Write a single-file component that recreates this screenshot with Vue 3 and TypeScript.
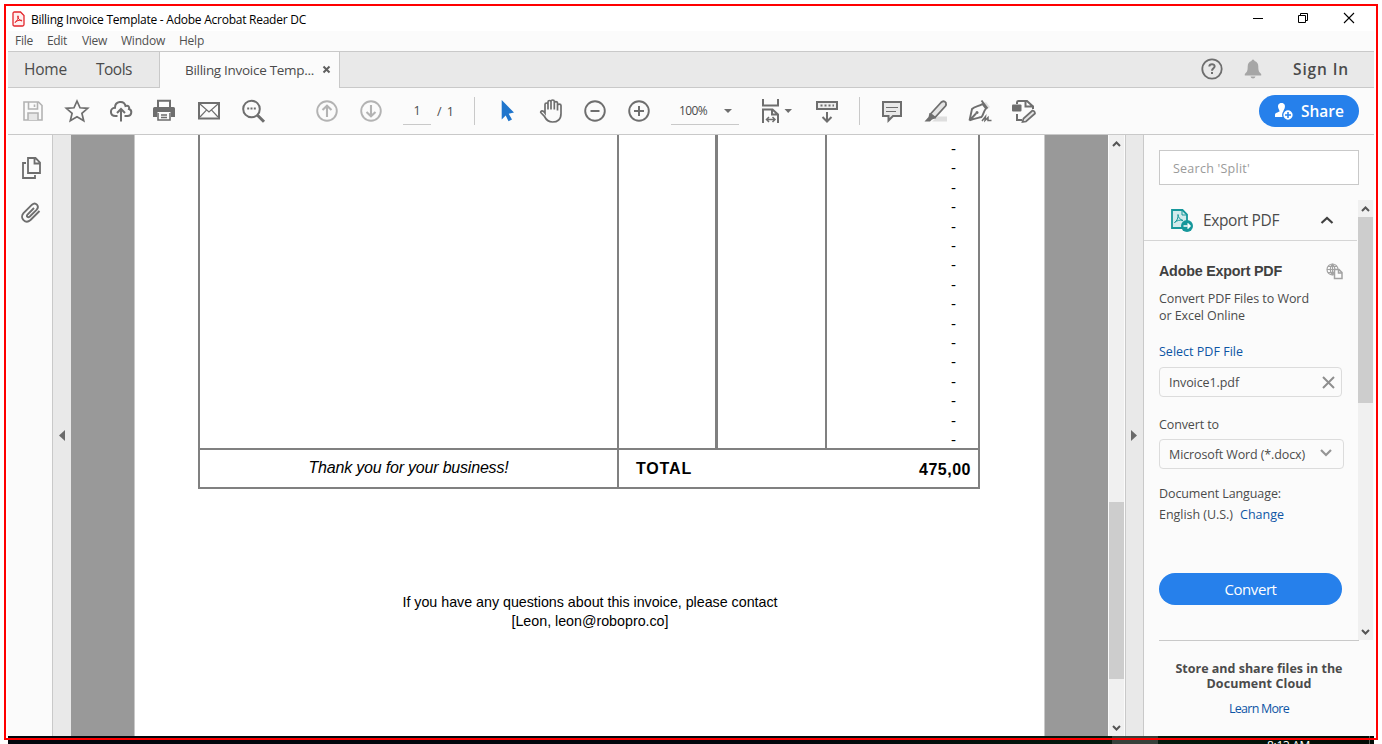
<script setup lang="ts">
import type { Directive } from 'vue'

const menus = [
  { label: 'File', width: 18 },
  { label: 'Edit', width: 20 },
  { label: 'View', width: 25 },
  { label: 'Window', width: 44 },
  { label: 'Help', width: 25 },
]
const rows = Array.from({ length: 16 }, (_, i) => i)

/* Tracks a label so that it occupies the given advance width. */
const vFit: Directive<HTMLElement, number> = {
  mounted(el, binding) {
    const count = (el.textContent ?? '').length
    const natural = el.getBoundingClientRect().width
    el.style.letterSpacing = `${(binding.value - natural) / count}px`
  },
}
</script>

<template>
  <div class="screen">
    <div class="window">
      <header class="titlebar">
        <svg class="app-icon" width="13" height="16" viewBox="0 0 13 16" fill="none">
          <path d="M2.5 1H8.5L12 4.5V13.5Q12 15 10.5 15H2.5Q1 15 1 13.500V2.500Q1 1 2.500 1Z" fill="#fff0f0" stroke="#e3252b" stroke-width="1.300" />
          <path d="M3 11.500C5 10.500 6.700 7 6.200 5C5.700 4 5 6 7 8.300C8.500 10 10.300 10.300 10 9.500C9.500 8.500 5 9.500 3.500 10.800Z" stroke="#e3252b" stroke-width="1" />
        </svg>
        <span v-fit="275" class="t title">Billing Invoice Template - Adobe Acrobat Reader DC</span>
        <svg class="controls" width="110" height="20" viewBox="0 0 110 20" fill="none" stroke="#000" stroke-width="1">
          <path d="M5 10.500H15" />
          <path d="M50.500 8.500H57.500V15.500H50.500ZM52.500 8V6.500H59.500V13.500H58" transform="translate(0 -1)" />
          <path d="M96 5L106 15M106 5L96 15" stroke-width="1.100" />
        </svg>
      </header>

      <nav class="menubar">
        <span v-for="m in menus" :key="m.label" v-fit="m.width" class="t">{{ m.label }}</span>
      </nav>

      <div class="tabs">
        <div class="nav-tabs">
          <span v-fit="43" class="t home">Home</span>
          <span v-fit="36" class="t">Tools</span>
        </div>
        <div class="doc-tab">
          <span v-fit="129" class="t">Billing Invoice Temp...</span>
          <svg width="9" height="9" viewBox="0 0 9 9" stroke="#606060" stroke-width="2"><path d="M1.500 1.500L7.500 7.500M7.500 1.500L1.500 7.500" /></svg>
        </div>
        <div class="account">
          <svg width="22" height="22" viewBox="-11 -11 22 22" fill="none" stroke="#6e6e6e" stroke-width="1.800">
            <circle r="9.700" />
            <path d="M-2.700 -2.500C-2.500 -5.500 2.700 -5.500 2.600 -2.500C2.500 -.8 0 -.7 0 1.700M0 3V5" stroke-width="2" />
          </svg>
          <svg class="bell" width="18" height="20" viewBox="0 0 18 20" fill="#a6a6a6"><path d="M7.500 2Q7.500 .5 9 .5T10.500 2Q14.300 3 14.300 7.500C14.300 12 15 13 17.200 15V16.500H.8V15C3 13 3.700 12 3.700 7.500Q3.700 3 7.500 2ZM6.500 17.500H11.500Q11 19.500 9 19.500T6.500 17.500Z" /></svg>
          <span v-fit="56" class="t signin">Sign In</span>
        </div>
      </div>

      <div class="toolbar">
        <div class="group">
          <svg class="ic light" viewBox="-22 -20 44 40"><path d="M-9 -9H5.500L9 -5.500V9H-9ZM-4.500 -9V-2H4.500V-9" /><path d="M-5 9V2H5V9" fill="#e7e7e7" /><path d="M1.500 -6.500V-4" /></svg>
          <svg class="ic" viewBox="-22 -20 44 40"><path d="M0 -10L3 -3.200L10.700 -2.700L4.900 2.300L6.700 9.800L0 5.700L-6.700 9.800L-4.900 2.300L-10.700 -2.700L-3 -3.200Z" stroke-width="1.700" /></svg>
          <svg class="ic" viewBox="-22 -20 44 40"><path d="M-3.500 5H-5.500C-11.500 5 -11.500 -3 -6 -3.200C-6 -10 3 -11 4.500 -5C7.500 -6 8.700 -4 8 -2C11.500 -1 11 5 6.500 5H3.500M0 10.500V-1.500M-4 2L0 -2L4 2" stroke-width="2" /></svg>
          <svg class="ic" viewBox="-21 -20 44 40"><path d="M-6 -4V-10.200H6V-4" stroke-width="2" /><path d="M-11 -2.500Q-11 -4 -9.500 -4H9.500Q11 -4 11 -2.500V6H7V2H-7V6H-11Z" fill="#6e6e6e" stroke="none" /><path d="M-6 2V9H6V2M-3 4H3M-3 6.500H3" /><path d="M-6.500 1.500H6.500" stroke="#fbfbfb" stroke-width="1" /></svg>
          <svg class="ic" viewBox="-22 -20 44 40"><rect x="-10" y="-8" width="20" height="15.500" stroke-width="2" /><path d="M-9 -7L0 1L9 -7M-9 6L-2.600 -.8M9 6L2.600 -.8" stroke-width="1.200" /></svg>
          <svg class="ic" viewBox="-22 -20 44 40"><circle cx="-1.500" cy="-2" r="8.300" stroke-width="2" /><path d="M4.500 4.200L11 10.700" stroke-width="3" /><path d="M-5.800 -2.500H-3.800M-2.500 -2.500H-.5M.8 -2.500H2.800" stroke-width="2" /></svg>
        </div>
        <div class="group paging">
          <svg class="ic light" viewBox="-22 -20 44 40"><circle r="9.800" stroke-width="1.900" /><path d="M0 6V-5M-4.500 -1L0 -5.300L4.500 -1" stroke-width="2.100" /></svg>
          <svg class="ic light" viewBox="-22 -20 44 40"><circle r="9.800" stroke-width="1.900" /><path d="M0 -6V5M-4.500 1L0 5.300L4.500 1" stroke-width="2.100" /></svg>
        </div>
        <div class="page-field"><span class="t">1</span></div>
        <span v-fit="18" class="t page-count">/ 1</span>
        <i class="sep"></i>
        <div class="group select">
          <svg class="ic" viewBox="-22 -20 44 40"><path d="M-5.300 -11L7 1.500L1.700 2.700L5 8.500L1.500 10.200L-1.300 4.500L-5.300 8.500Z" fill="#1f75cc" stroke="none" /></svg>
          <svg class="ic" viewBox="-22 -20 44 40"><path d="M-6 2V-6.500C-6 -8.500 -3 -8.500 -3 -6.500V-1.500V-9C-3 -11 0 -11 0 -9V-1.500V-9.500C0 -11.500 3.300 -11.500 3.300 -9.500V-1.500V-8C3.300 -9.800 6.500 -9.800 6.500 -8V-.5V-5.500C6.500 -7.300 10 -7.300 10 -5.500V2.500C10 8.500 6.500 11 1.500 11C-3 11 -5 8.500 -6.500 5.500L-10.300 1.500C-10.500 -.8 -7.500 -.5 -6 2Z" stroke-width="1.700" /></svg>
          <svg class="ic" viewBox="-22 -20 44 40"><circle r="9.800" stroke-width="1.900" /><path d="M-4.500 0H4.500" stroke-width="2" /></svg>
          <svg class="ic" viewBox="-22 -20 44 40"><circle r="9.800" stroke-width="1.900" /><path d="M-5 0H5M0 -5V5" stroke-width="2" /></svg>
        </div>
        <div class="zoom">
          <span v-fit="28" class="t">100%</span>
          <svg width="8" height="4" viewBox="0 0 8 4" fill="#6e6e6e"><path d="M0 0H8L4 4Z" /></svg>
        </div>
        <div class="group view">
          <svg class="ic" viewBox="-23 -20 44 40"><path d="M-13 -12V-5.500H2V-12M-13 12V-1.500H-3.500L2 3.500V12M-4 -1V3.500H2" stroke-width="2" /><path d="M-9.500 8.500H-1M-7 6L-9.500 8.500L-7 11M-3.500 6L-1 8.500L-3.500 11" stroke-width="1.500" /><path d="M8.500 -2H16L12.200 2Z" fill="#6e6e6e" stroke="none" /></svg>
          <svg class="ic keys" viewBox="-22 -20 44 40"><rect x="-10" y="-9" width="20" height="7" fill="#eee" stroke-width="2" /><path d="M-6.500 -5.500H7" stroke-width="2" stroke-dasharray="2 2" /><path d="M0 1V10M-4.500 6L0 10.500L4.500 6" stroke-width="2" /></svg>
        </div>
        <i class="sep second"></i>
        <div class="group annotate">
          <svg class="ic" viewBox="-22 -20 44 40"><path d="M-9 -9H9V5H1L-3.500 9.500V5H-9Z" fill="#e9e9e9" stroke-width="2" /><path d="M-6 -3.500H6M-6 .5H4" stroke-width="1.200" /></svg>
          <svg class="ic" viewBox="-22 -20 44 40"><path d="M-4 10.500H11V5.500H2Z" fill="#dedede" stroke="none" /><path d="M-5.500 3L5 -8.500Q7.500 -11 9.800 -8.500Q10.500 -6.500 9.500 -5L-1 6.500Z" fill="#e4e4e4" stroke-width="1.800" /><path d="M-6.500 2L.5 7L-4 8.500L-6 10.500H-11.500L-7.500 6Z" fill="#6e6e6e" stroke="none" /></svg>
          <svg class="ic" viewBox="-22 -20 44 40"><path d="M1 -7L6 -9L10 -4L6 -1Z" fill="#e0e0e0" stroke="none" /><path d="M1.500 -10.500L7.500 -2.500M-10.500 9.500L-8 -2C-5 -5 -1 -4.500 2.500 -7L6 -2.500C3 1 4 3 1.500 6C-2 7 -6 7.500 -10.500 9.500L-4 2.500" stroke-width="1.900" /><circle cx="-3" cy="1.500" r="1.500" fill="#6e6e6e" stroke="none" /><path d="M2 10L5.500 5.500L5 9.500L8 6.500L8 9.500H11.500" stroke-width="1.500" /></svg>
          <svg class="ic" viewBox="-22 -20 44 40"><path d="M-7 -7V-8.500Q-7 -10 -5.500 -10H3L8.500 -5M1.500 -10V-4.500H9V-2M-7 3V9H-2" stroke-width="2" /><rect x="-12" y="-6.500" width="9.500" height="7" rx="1" fill="#6e6e6e" stroke="none" /><path d="M-1.500 11L-.5 7.500L8.500 -.5Q11 0 11 2.500L2 10.500Z" fill="#e4e4e4" stroke-width="1.700" /></svg>
        </div>
        <button class="share">
          <svg width="20" height="18" viewBox="0 0 20 18"><path d="M7.500 0C10.500 0 11.500 2.500 10.700 5C10.300 6.500 9.500 7 9.500 8.500C10.500 9 12.500 9 13 10V14H1V12C1 9.500 4 9.500 5.500 8.500C5.500 7 4.700 6.500 4.300 5C3.500 2.500 4.500 0 7.500 0Z" fill="#fff" /><circle cx="14" cy="12" r="5.300" fill="#fff" stroke="#2680eb" stroke-width="1.300" /><path d="M11 12H17M14 9V15" stroke="#2680eb" stroke-width="1.500" /></svg>
          <span v-fit="43" class="t">Share</span>
        </button>
      </div>

      <main class="work">
        <aside class="rail">
          <svg width="22" height="24" viewBox="0 0 22 24" fill="none" stroke="#6e6e6e" stroke-width="1.800"><path d="M5 7H2V22H14V19" /><path d="M7 2H14.500L19 6.500V17H7ZM13.500 2V7.500H19" /></svg>
          <svg class="clip" width="22" height="22" viewBox="0 0 22 22" fill="none" stroke="#6e6e6e" stroke-width="1.900"><path d="M14 6L7.500 12.500C6 14.500 8 16 9.800 14.500L16.500 7.800C20 4 15.500 -.5 12 2.700L3.500 11.200C-.8 16 5.500 22.500 10.500 18L19.500 9" /></svg>
        </aside>
        <div class="gutter">
          <svg width="6" height="11" viewBox="0 0 6 11" fill="#6a6a6a"><path d="M6 0V11L0 5.500Z" /></svg>
        </div>

        <section class="canvas">
          <article class="sheet">
            <div class="invoice">
              <div class="lines">
                <div></div><div></div><div></div>
                <div class="amounts"><span v-for="r in rows" :key="r">-</span></div>
              </div>
              <div class="totals">
                <div class="thanks"><span v-fit="200">Thank you for your business!</span></div>
                <div class="total"><b v-fit="56">TOTAL</b><b v-fit="52" class="sum">475,00</b></div>
              </div>
            </div>
            <p class="contact"><span v-fit="375">If you have any questions about this invoice, please contact</span><span v-fit="157">[Leon, leon@robopro.co]</span></p>
          </article>
        </section>

        <div class="scroll main-scroll">
          <svg width="9" height="6" viewBox="0 0 9 6"><path d="M1 5L4.500 1.500L8 5" /></svg>
          <i class="thumb"></i>
          <svg width="9" height="6" viewBox="0 0 9 6"><path d="M1 1L4.500 4.500L8 1" /></svg>
        </div>
        <div class="gutter right">
          <svg width="6" height="11" viewBox="0 0 6 11" fill="#6a6a6a"><path d="M0 0V11L6 5.500Z" /></svg>
        </div>

        <aside class="panel">
          <div class="search"><span v-fit="77" class="t">Search 'Split'</span></div>
          <div class="panel-view">
            <div class="panel-body">
              <div class="export-head">
                <svg width="23" height="24" viewBox="0 0 23 24" fill="none"><path d="M2 2H12.500L17 6.500V20H2Z" fill="#d2ebec" stroke="#16979b" stroke-width="1.800" /><path d="M12 2V7H17" stroke="#16979b" /><path d="M4.500 14.500C7 13 8.500 9.500 8 6.500C8 9.500 10 11.500 13 12.500C10 11.500 7 12.500 4.500 14.500Z" stroke="#16979b" stroke-width="1" /><circle cx="17" cy="18" r="6" fill="#16979b" /><path d="M13.500 18H20M17.500 15.500L20 18L17.500 20.500" stroke="#fff" stroke-width="1.500" /></svg>
                <span v-fit="76" class="t">Export PDF</span>
                <svg class="fold" width="14" height="9" viewBox="0 0 14 9" fill="none" stroke="#404040" stroke-width="2.200"><path d="M1.500 7L7 2L12.500 7" /></svg>
              </div>
              <div class="export">
                <div class="heading">
                  <b v-fit="123">Adobe Export PDF</b>
                  <svg width="18" height="17" viewBox="0 0 18 17" fill="none" stroke="#a2a2a2" stroke-width="1.200"><circle cx="7.500" cy="6.500" r="5.500" /><path d="M7.500 1C4.500 4 4.500 9 7.500 12M7.500 1C10.500 4 10.500 8 7.500 12M7.500 1V12M2 6.500H13M3 3.500H12M3 9.500H12" /><path d="M9.500 6.500H14L17 9.500V15.500H9.500ZM13.500 6.500V10H17" fill="#fbfbfb" stroke-width="1.500" /></svg>
                </div>
                <p class="about"><span v-fit="150" class="t">Convert PDF Files to Word</span><span v-fit="86" class="t">or Excel Online</span></p>
                <a v-fit="84" class="t pick">Select PDF File</a>
                <div class="box file"><span v-fit="70" class="t">Invoice1.pdf</span><svg width="13" height="13" viewBox="0 0 13 13" stroke="#8e8e8e" stroke-width="2"><path d="M1 1L12 12M12 1L1 12" /></svg></div>
                <span v-fit="60" class="t convert-to">Convert to</span>
                <div class="box format"><span v-fit="136" class="t">Microsoft Word (*.docx)</span><svg width="12" height="8" viewBox="0 0 12 8" fill="none" stroke="#959595" stroke-width="2.200"><path d="M1 1L6 6L11 1" /></svg></div>
                <span v-fit="122" class="t lang-label">Document Language:</span>
                <div class="language"><span v-fit="74" class="t">English (U.S.)</span><a v-fit="44" class="t">Change</a></div>
                <button class="convert"><span v-fit="52" class="t">Convert</span></button>
              </div>
            </div>
            <div class="scroll side-scroll">
              <svg width="9" height="6" viewBox="0 0 9 6"><path d="M1 5L4.500 1.500L8 5" /></svg>
              <i class="thumb"></i>
              <svg width="9" height="6" viewBox="0 0 9 6"><path d="M1 1L4.500 4.500L8 1" /></svg>
            </div>
          </div>
          <footer class="cloud"><b v-fit="167" class="t">Store and share files in the</b><b v-fit="105" class="t">Document Cloud</b><a v-fit="60" class="t">Learn More</a></footer>
        </aside>
      </main>
    </div>
    <div class="taskbar"><i class="active-app"></i><span v-fit="43" class="t clock">8:13 AM</span><i class="peek"></i></div>
    <div class="outline"></div>
  </div>
</template>

<style>
body { background: #fff; overflow: hidden; }
</style>

<style scoped>
* { box-sizing: border-box; }
.screen { position: relative; width: 1382px; height: 744px; padding: 6px 8px 0; overflow: hidden; font-family: "Open Sans", "Noto Sans", sans-serif; font-size: 12.5px; color: #4b4b4b; }
.outline { position: absolute; left: 4px; top: 4px; width: 1374px; height: 736px; border: 2px solid #f00; }
.t { display: block; flex: none; width: max-content; white-space: nowrap; }
svg { display: block; flex: none; }
a { color: #0d55a5; }
button { border: 0; padding: 0; font: inherit; }
.window { height: 730px; display: flex; flex-direction: column; background: #fbfbfb; }
.titlebar { height: 25px; background: #fff; display: flex; align-items: center; padding: 1px 15px 0 4px; color: #000; font-size: 12px; }
.title { margin-left: 6px; }
.controls { margin-left: auto; margin-top: -3px; margin-right: 1px; }
.menubar { height: 20px; display: flex; padding: 0 7px; gap: 15px; line-height: 20px; font-size: 12px; color: #505050; }
.menubar .t:nth-child(2), .menubar .t:nth-child(4), .menubar .t:nth-child(5) { margin-left: -1px; }
.menubar .t:nth-child(5) { margin-left: -1px; }
.tabs { height: 37px; background: #e9e9e9; border-top: 1px solid #c9c9c9; display: flex; }
.nav-tabs { width: 151px; border-bottom: 1px solid #c9c9c9; display: flex; padding: 0 0 0 16px; gap: 29px; line-height: 35px; font-size: 15.5px; }
.doc-tab { width: 181px; border: 1px solid #c9c9c9; border-width: 0 1px; background: #fbfbfb; display: flex; align-items: center; padding-left: 25px; font-size: 13.5px; padding-bottom: 1px; }
.doc-tab svg { margin-left: 8px; }
.account { flex: 1; border-bottom: 1px solid #c9c9c9; display: flex; align-items: center; justify-content: flex-end; padding-right: 25px; padding-bottom: 1px; }
.bell { margin: 0 31px 0 21px; }
.signin { font-size: 15.500px; font-weight: 600; }
.toolbar { height: 47px; border-bottom: 1px solid #c9c9c9; display: flex; align-items: center; padding-left: 3px; }
.group { display: flex; flex: none; }
.ic { width: 44px; height: 40px; fill: none; stroke: #6e6e6e; stroke-width: 1.6; }
.light { stroke: #b3b3b3; }
.paging { margin-left: 30px; }
.page-field { width: 28px; height: 28px; margin-left: 10px; border-bottom: 1px solid #c9c9c9; display: flex; justify-content: center; line-height: 28px; }
.page-count { margin-left: 6px; }
.sep { width: 1px; height: 28px; background: #c9c9c9; margin: 0 10px 0 19px; }
.zoom { width: 68px; height: 28px; margin-left: 10px; border-bottom: 1px solid #c9c9c9; display: flex; align-items: center; justify-content: space-between; padding: 0 7px 0 8px; font-size: 12px; }
.view { margin-left: 14px; }
.keys { margin-left: 8px; }
.sep.second { margin-left: 10px; }
.share { width: 100px; height: 32px; border-radius: 16px; background: #2680eb; color: #fff; font-size: 15.500px; font-weight: 600; display: flex; align-items: center; justify-content: space-between; padding: 0 15px 0 15px; margin-left: auto; margin-right: 15px; }
.share svg { margin-top: 1px; }
.work { flex: 1; display: flex; min-height: 0; }
.rail { width: 45px; border-right: 1px solid #c9c9c9; padding: 21px 0 0 13px; }
.clip { margin: 22px 0 0 -1px; }
.gutter { width: 18px; background: #e9e9e9; display: flex; align-items: center; justify-content: center; }
.gutter.right { width: 19px; border: 1px solid #c9c9c9; border-width: 0 1px; padding-right: 2px; }
.canvas { width: 1037px; background: #999; padding-left: 63px; flex: none; }
.sheet { width: 911px; height: 601px; background: #fff; border: 1px solid #c9c9c9; border-width: 0 1px; padding-left: 63px; font-family: "Liberation Sans", Arial, sans-serif; color: #000; }
.invoice { width: 782px; }
.lines { height: 315px; display: grid; grid-template-columns: 421px 99px 109px 153px; border-bottom: 2px solid #808080; }
.lines > div { border-right: 2px solid #808080; }
.lines > div:first-child { border-left: 2px solid #808080; }
.lines > div:nth-child(2) { border-right-width: 3px; }
.amounts { display: flex; flex-direction: column; padding: 4px 22px 0 0; text-align: right; font-size: 15px; line-height: 19.4px; }
.totals { height: 39px; display: grid; grid-template-columns: 421px 361px; border: 2px solid #808080; border-top: 0; }
.thanks { border-right: 2px solid #808080; width: 419px; text-align: center; font-style: italic; font-size: 16px; line-height: 35px; }
.thanks span, .total b, .heading b { display: inline-block; white-space: nowrap; flex: none; }
.total { display: flex; justify-content: space-between; margin-left: -2px; width: 361px; padding: 0 9px 0 17px; font-size: 16px; line-height: 37px; }
.sum { padding-top: 1px; }
.contact { margin: 104px 0 0 1px; width: 782px; display: flex; flex-direction: column; align-items: center; font-size: 14.3px; line-height: 19px; white-space: nowrap; }
.scroll { width: 15px; background: #f0f0f0; display: flex; flex-direction: column; align-items: center; justify-content: space-between; flex: none; }
.scroll svg { fill: none; stroke: #555; stroke-width: 2; }
.thumb { width: 15px; background: #cdcdcd; }
.main-scroll { margin: 0 1px; padding: 6px 0 5px; }
.main-scroll .thumb { height: 177px; margin-top: 309px; }
.panel { width: 230px; padding-top: 15px; display: flex; flex-direction: column; }
.search { width: 200px; height: 35px; margin-left: 15px; background: #fff; border: 1px solid #c9c9c9; padding-left: 13px; line-height: 35px; color: #9a9a9a; }
.panel-view { height: 440px; margin-top: 15px; display: flex; }
.panel-body { width: 214px; flex: none; }
.export-head { height: 41px; width: 213px; border-bottom: 1px solid #d5d5d5; display: flex; align-items: center; padding: 0 23px 0 26px; font-size: 15.500px; }
.export-head .t { margin-left: 10px; }
.fold { margin-left: auto; }
.export { padding-left: 15px; display: flex; flex-direction: column; }
.heading { margin-top: 19px; height: 22px; width: 184px; display: flex; align-items: center; justify-content: space-between; font-family: "Liberation Sans", Arial, sans-serif; font-size: 14.3px; color: #404040; }
.about { margin: 8px 0 0; line-height: 17px; }
.pick { margin-top: 19px; line-height: 17px; }
.box { height: 30px; border: 1px solid #dcdcdc; border-radius: 4px; display: flex; align-items: center; justify-content: space-between; padding: 0 6px 0 9px; }
.file { width: 183px; margin-top: 7px; }
.convert-to { margin-top: 18px; line-height: 19px; }
.format { width: 185px; margin-top: 5px; padding-right: 11px; }
.format .t { padding-top: 1px; }
.format svg { margin-top: -2px; }
.lang-label { margin-top: 15px; line-height: 19px; }
.language { margin-top: 2px; display: flex; gap: 7px; line-height: 19px; }
.convert { width: 183px; height: 32px; margin-top: 49px; border-radius: 16px; background: #2680eb; color: #fff; font-size: 15px; display: flex; align-items: center; justify-content: center; padding-bottom: 1px; }
.side-scroll { padding: 6px 0 5px; }
.side-scroll .thumb { height: 186px; margin-top: -222px; }
.cloud { width: 200px; margin-left: 15px; border-top: 1px solid #c9c9c9; padding-top: 20px; display: flex; flex-direction: column; align-items: center; line-height: 15px; }
.cloud a { margin-top: 10px; }
.taskbar { height: 8px; background: linear-gradient(90deg, #01060c 55%, #041b0d 83%, #010b05); overflow: hidden; display: flex; color: #fff; }
.active-app { width: 46px; height: 8px; margin-left: 1104px; background: #36413a; }
.clock { margin: 5px 0 0 109px; line-height: 10px; font-size: 12px; }
.peek { width: 1px; height: 8px; margin-left: 59px; background: #56605a; }
</style>
